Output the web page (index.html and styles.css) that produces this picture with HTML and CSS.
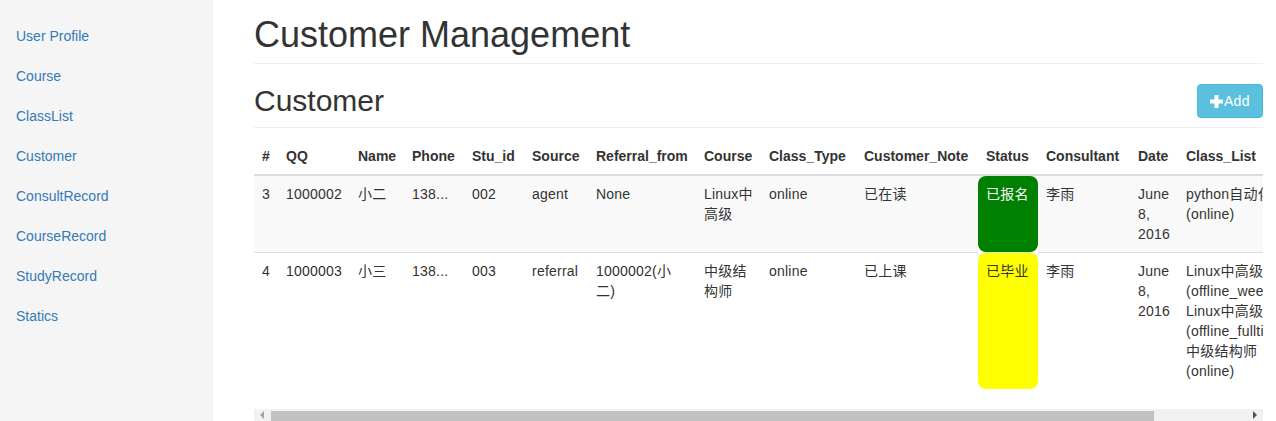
FILE: index.html
```html
<!DOCTYPE html>
<html lang="en">
<head>
<meta charset="utf-8">
<title>Customer Management</title>
<link rel="stylesheet" href="styles.css">
</head>
<body>
<div class="layout">
  <aside class="sidebar">
    <ul class="nav">
      <li><a href="#">User Profile</a></li>
      <li><a href="#">Course</a></li>
      <li><a href="#">ClassList</a></li>
      <li><a href="#">Customer</a></li>
      <li><a href="#">ConsultRecord</a></li>
      <li><a href="#">CourseRecord</a></li>
      <li><a href="#">StudyRecord</a></li>
      <li><a href="#">Statics</a></li>
    </ul>
  </aside>
  <main class="main">
    <h1 class="page-header">Customer Management</h1>
    <div class="sub-header">
      <h2>Customer</h2>
      <a class="btn" href="#"><svg class="plus" viewBox="0 0 13 13" width="13" height="13"><rect x="4.5" y="0" width="4" height="13" fill="#fff"/><rect x="0" y="4.5" width="13" height="4" fill="#fff"/></svg>Add</a>
    </div>
    <div class="table-wrap">
      <table class="table">
        <thead>
          <tr>
            <th>#</th><th>QQ</th><th>Name</th><th>Phone</th><th>Stu_id</th><th>Source</th><th>Referral_from</th><th>Course</th><th>Class_Type</th><th>Customer_Note</th><th>Status</th><th>Consultant</th><th>Date</th><th>Class_List</th>
          </tr>
        </thead>
        <tbody>
          <tr>
            <td>3</td><td>1000002</td><td>小二</td><td>138...</td><td>002</td><td>agent</td><td>None</td><td>Linux中高级</td><td>online</td><td>已在读</td><td class="status signed">已报名</td><td>李雨</td><td>June 8, 2016</td><td>python自动化(online)</td>
          </tr>
          <tr>
            <td>4</td><td>1000003</td><td>小三</td><td>138...</td><td>003</td><td>referral</td><td>1000002(小二)</td><td>中级结构师</td><td>online</td><td>已上课</td><td class="status graduated">已毕业</td><td>李雨</td><td>June 8, 2016</td><td>Linux中高级(offline_weekend)<br>Linux中高级(offline_fulltime)<br>中级结构师(online)</td>
          </tr>
        </tbody>
      </table>
    </div>
    <div class="hscroll">
      <div class="sb-btn"><span class="arrow-left"></span></div>
      <div class="sb-thumb"></div>
      <div class="sb-track"></div>
      <div class="sb-btn"><span class="arrow-right"></span></div>
    </div>
  </main>
</div>
</body>
</html>
```
FILE: styles.css
```css
html, body {
  margin: 0;
  padding: 0;
  background: #fff;
}
body {
  font-family: "Liberation Sans", Arial, "Noto Sans CJK SC", sans-serif;
  font-size: 14px;
  line-height: 20px;
  color: #333;
  overflow: hidden;
}
.layout {
  display: flex;
  min-height: 421px;
}
.sidebar {
  width: 212px;
  flex: none;
  background: #f5f5f5;
  border-right: 1px solid #eee;
  padding-top: 16px;
  box-sizing: content-box;
}
.nav {
  list-style: none;
  margin: 0;
  padding: 0;
}
.nav a {
  display: block;
  padding: 10px 16px;
  color: #337ab7;
  text-decoration: none;
}
.main {
  flex: 1;
  min-width: 0;
  padding: 0 13px 0 41px;
}
.page-header {
  margin: 15px 0 0;
  padding-bottom: 8px;
  border-bottom: 1px solid #eee;
  font-size: 36px;
  line-height: 40px;
  font-weight: 500;
}
.sub-header {
  display: flex;
  justify-content: space-between;
  align-items: flex-start;
  margin-top: 20px;
  padding-bottom: 9px;
  border-bottom: 1px solid #eee;
}
.sub-header h2 {
  margin: 0;
  font-size: 30px;
  line-height: 33px;
  font-weight: 500;
}
.btn {
  display: flex;
  align-items: center;
  padding: 6px 12px;
  height: 20px;
  background: #5bc0de;
  border: 1px solid #46b8da;
  border-radius: 4px;
  color: #fff;
  text-decoration: none;
  font-size: 14px;
  line-height: 20px;
  letter-spacing: 0.4px;
}
.plus {
  margin-right: 1px;
  margin-top: 1px;
}
.table-wrap {
  margin-top: 10px;
  overflow: hidden;
}
.table {
  width: 1054px;
  table-layout: fixed;
  border-collapse: separate;
  border-spacing: 0;
  margin-bottom: 20px;
}
.table th,
.table td {
  padding: 8px;
  line-height: 20px;
  text-align: left;
  vertical-align: top;
  border-top: 1px solid #ddd;
  overflow: hidden;
}
.table td {
  letter-spacing: 0.22px;
}
.table th {
  vertical-align: bottom;
  border-top: 0;
  border-bottom: 2px solid #ddd;
  font-weight: bold;
  white-space: nowrap;
}
.table th:nth-child(1) { width: 8px; }
.table th:nth-child(2) { width: 56px; }
.table th:nth-child(3) { width: 38px; }
.table th:nth-child(4) { width: 44px; }
.table th:nth-child(5) { width: 44px; }
.table th:nth-child(6) { width: 48px; }
.table th:nth-child(7) { width: 92px; }
.table th:nth-child(8) { width: 49px; }
.table th:nth-child(9) { width: 79px; }
.table th:nth-child(10) { width: 106px; }
.table th:nth-child(11) { width: 44px; }
.table th:nth-child(12) { width: 76px; }
.table th:nth-child(13) { width: 32px; }
.table th:nth-child(14) { width: 114px; }
.table tbody tr:first-child td {
  border-top: 0;
}
.table tbody tr:nth-child(odd) {
  background: #f9f9f9;
}
.status {
  border-radius: 8px;
  background-clip: padding-box;
}
.status.signed {
  background-color: #008000;
  color: #fff;
}
.status.graduated {
  background-color: #ffff00;
}
.hscroll {
  display: flex;
  height: 17px;
  background: #f1f1f1;
}
.sb-btn {
  width: 17px;
  flex: none;
  display: flex;
  align-items: center;
  justify-content: center;
}
.sb-thumb {
  width: 883px;
  flex: none;
  margin: 2px 0;
  background: #c1c1c1;
}
.sb-track {
  flex: 1;
}
.arrow-left {
  width: 0;
  height: 0;
  border-top: 4px solid transparent;
  border-bottom: 4px solid transparent;
  border-right: 4px solid #a3a3a3;
  margin-top: -5px;
  margin-left: -1px;
}
.arrow-right {
  width: 0;
  height: 0;
  border-top: 4px solid transparent;
  border-bottom: 4px solid transparent;
  border-left: 4px solid #505050;
  margin-top: -5px;
  margin-left: 1px;
}
```
